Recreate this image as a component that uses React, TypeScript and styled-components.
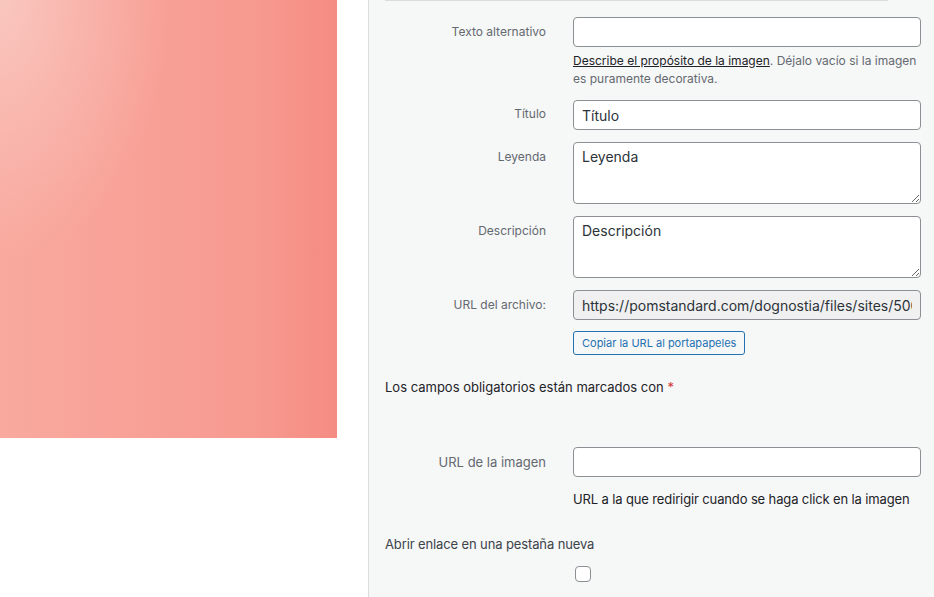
import React from "react";
import styled, { createGlobalStyle } from "styled-components";

const Global = createGlobalStyle`
  html, body { margin: 0; padding: 0; background: #fff; }
  body { font-family: Inter, "Liberation Sans", sans-serif; -webkit-font-smoothing: antialiased; }
  * { box-sizing: border-box; }
`;

const Page = styled.div`
  display: flex;
  width: 934px;
  height: 597px;
  overflow: hidden;
  background: #fff;
`;

const Preview = styled.div`
  width: 368px;
  flex: none;
`;

const Photo = styled.div`
  width: 337px;
  height: 438px;
  background:
    radial-gradient(ellipse 170px 260px at 0px 0px, rgba(249, 202, 195, 0.9) 0%, rgba(249, 202, 195, 0.45) 45%, rgba(249, 202, 195, 0) 100%),
    linear-gradient(90deg, #f9a99e 0%, #f8a197 40%, #f79a90 75%, #f58c83 100%);
`;

const Sidebar = styled.aside`
  flex: 1;
  background: #f6f7f7;
  border-left: 1px solid #dcdcde;
  padding: 0 13px 0 16px;
  color: #1d2327;
`;

const Divider = styled.div`
  width: 503px;
  height: 1px;
  background: #dcdcde;
`;

const Row = styled.div<{ $mt: number; $center?: boolean }>`
  display: grid;
  grid-template-columns: 161px 348px;
  column-gap: 27px;
  align-items: ${(p) => (p.$center ? "center" : "start")};
  margin-top: ${(p) => p.$mt}px;
`;

const Label = styled.label<{ $pt?: number; $size?: number }>`
  text-align: right;
  font-size: ${(p) => p.$size ?? 12}px;
  line-height: 16px;
  color: #646970;
  padding-top: ${(p) => p.$pt ?? 0}px;
`;

const Input = styled.input<{ $readonly?: boolean }>`
  display: block;
  width: 348px;
  height: 30px;
  margin: 0;
  padding: 0 8px;
  border: 1px solid #8c8f94;
  border-radius: 4px;
  background: ${(p) => (p.$readonly ? "#f0f0f1" : "#fff")};
  font-family: inherit;
  font-size: 14px;
  color: #2c3338;
  outline: none;
`;

const TextArea = styled.textarea`
  display: block;
  width: 348px;
  height: 62px;
  margin: 0;
  padding: 5px 8px;
  border: 1px solid #8c8f94;
  border-radius: 4px;
  background: #fff;
  font-family: inherit;
  font-size: 14px;
  line-height: 18px;
  color: #2c3338;
  outline: none;
`;

const Help = styled.p<{ $mt: number; $size?: number; $lh?: number; $color?: string; $ls?: number }>`
  margin: ${(p) => p.$mt}px 0 0 188px;
  font-size: ${(p) => p.$size ?? 12}px;
  line-height: ${(p) => p.$lh ?? 18}px;
  letter-spacing: ${(p) => p.$ls ?? 0}px;
  color: ${(p) => p.$color ?? "#646970"};
  a { color: #1d2327; text-decoration: underline; }
`;

const Button = styled.button`
  display: block;
  margin: 11px 0 0 188px;
  height: 24px;
  padding: 0 8px;
  border: 1px solid #2271b1;
  border-radius: 3px;
  background: #f6f7f7;
  color: #2271b1;
  font-family: inherit;
  font-size: 11px;
  line-height: 22px;
  cursor: pointer;
`;

const Note = styled.p<{ $mt: number; $ls?: number; $color?: string }>`
  margin: ${(p) => p.$mt}px 0 0;
  font-size: 13px;
  line-height: 20px;
  letter-spacing: ${(p) => p.$ls ?? 0}px;
  color: ${(p) => p.$color ?? "#1d2327"};
`;

const Required = styled.span`
  color: #d63638;
`;

const Check = styled.input`
  display: block;
  appearance: none;
  margin: 12px 0 0 190px;
  width: 16px;
  height: 16px;
  border: 1px solid #8c8f94;
  border-radius: 4px;
  background: #fff;
`;

export default function App() {
  return (
    <Page>
      <Global />
      <Preview>
        <Photo />
      </Preview>
      <Sidebar>
        <Divider />
        <Row $mt={16}>
          <Label $pt={7}>Texto alternativo</Label>
          <Input />
        </Row>
        <Help $mt={5}>
          <a href="#">Describe el propósito de la imagen</a>. Déjalo vacío si la imagen es
          puramente decorativa.
        </Help>
        <Row $mt={12}>
          <Label $pt={6}>Título</Label>
          <Input defaultValue="Título" />
        </Row>
        <Row $mt={12}>
          <Label $pt={7}>Leyenda</Label>
          <TextArea defaultValue="Leyenda" />
        </Row>
        <Row $mt={12}>
          <Label $pt={7}>Descripción</Label>
          <TextArea defaultValue="Descripción" />
        </Row>
        <Row $mt={12}>
          <Label $pt={7}>URL del archivo:</Label>
          <Input $readonly readOnly defaultValue="https://pomstandard.com/dognostia/files/sites/500/2024/imagen.jpg" />
        </Row>
        <Button>Copiar la URL al portapapeles</Button>
        <Note $mt={22}>
          Los campos obligatorios están marcados con <Required>*</Required>
        </Note>
        <Row $mt={50} $center>
          <Label $size={13}>URL de la imagen</Label>
          <Input />
        </Row>
        <Help $mt={12} $size={13} $lh={20} $ls={-0.13} $color="#1d2327">
          URL a la que redirigir cuando se haga click en la imagen
        </Help>
        <Note $mt={25} $ls={-0.12} $color="#3c434a">Abrir enlace en una pestaña nueva</Note>
        <Check type="checkbox" />
      </Sidebar>
    </Page>
  );
}
